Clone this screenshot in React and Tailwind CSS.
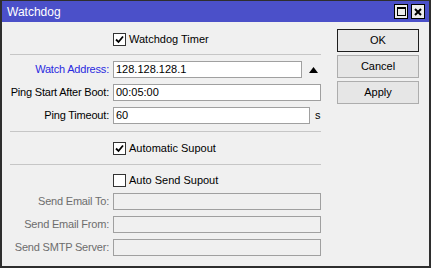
import React from 'react';

const font = { fontFamily: '"Liberation Sans", Arial, sans-serif' };

const Check = ({ checked }) => (
    <span className="flex h-[13px] w-[13px] items-center justify-center border border-[#333333] bg-white">
        {checked && (
            <svg width="9" height="9" viewBox="0 0 9 9">
                <path d="M1 4.5 L3.5 7 L8 1.5" fill="none" stroke="#000" strokeWidth="1.8" />
            </svg>
        )}
    </span>
);

const CheckRow = ({ checked, label, className }) => (
    <div className={`flex h-[17px] items-center gap-[3px] pl-[103px] ${className}`}>
        <Check checked={checked} />
        <span className="text-[11px] text-black">{label}</span>
    </div>
);

const Field = ({ label, value, labelClass, inputClass, after, className, disabled }) => (
    <div className={`flex h-[17px] items-center ${className}`}>
        <span className={`w-[99px] text-right text-[11px] tracking-[-0.2px] whitespace-nowrap ${labelClass}`}>{label}</span>
        <div
            className={`ml-[4px] flex h-[17px] items-center border border-[#a0a0a0] px-[2px] text-[11px] text-black ${disabled ? 'bg-[#f0f0f0]' : 'bg-white'} ${inputClass}`}
        >
            {value}
        </div>
        {after}
    </div>
);

const Separator = ({ className }) => <div className={`h-px w-[311px] bg-[#c6c6c6] ${className}`} />;

const Button = ({ children, primary, className }) => (
    <div
        className={`flex h-[23px] w-[82px] items-center justify-center text-[11px] text-black ${primary ? 'border border-[#1e1e1e] bg-[#e8e8e8]' : 'border border-[#adadad] bg-[#e6e6e6]'} ${className}`}
    >
        {children}
    </div>
);

const App = () => {
    return (
        <div
            className="flex h-[268px] w-[431px] flex-col border-x-2 border-b-2 border-t border-[#2e2e2e] bg-[#f0f0f0]"
            style={font}
        >
            {/* title bar */}
            <div className="flex h-[21px] items-center justify-between bg-[#4b50c9] pl-[5px] pr-[4px]">
                <span className="text-[12px] text-white">Watchdog</span>
                <div className="flex gap-[3px]">
                    <div className="flex h-[15px] w-[14px] items-center justify-center border border-black bg-[#ececec]">
                        <div className="h-[9px] w-[9px] border border-black border-t-2" />
                    </div>
                    <div className="flex h-[15px] w-[14px] items-center justify-center border border-black bg-[#ececec]">
                        <svg width="8" height="8" viewBox="0 0 8 8">
                            <path d="M1 1 L7 7 M7 1 L1 7" stroke="#000" strokeWidth="2" />
                        </svg>
                    </div>
                </div>
            </div>

            <div className="flex flex-1">
                {/* form */}
                <div className="flex w-[327px] flex-col pl-[8px]">
                    <CheckRow checked label="Watchdog Timer" className="mt-[9px]" />
                    <Separator className="mt-[6px]" />
                    <Field
                        label="Watch Address:"
                        labelClass="text-[#2a2ae0]"
                        value="128.128.128.1"
                        inputClass="w-[189px]"
                        className="mt-[6px]"
                        after={
                            <svg className="ml-[7px]" width="9" height="6" viewBox="0 0 9 6">
                                <polygon points="4.5,0 9,6 0,6" fill="#000" />
                            </svg>
                        }
                    />
                    <Field
                        label="Ping Start After Boot:"
                        labelClass="text-black"
                        value="00:05:00"
                        inputClass="w-[208px]"
                        className="mt-[6px]"
                    />
                    <Field
                        label="Ping Timeout:"
                        labelClass="text-black"
                        value="60"
                        inputClass="w-[197px]"
                        className="mt-[6px]"
                        after={<span className="ml-[5px] text-[11px] text-black">s</span>}
                    />
                    <Separator className="mt-[7px]" />
                    <CheckRow checked label="Automatic Supout" className="mt-[8px]" />
                    <Separator className="mt-[7px]" />
                    <CheckRow label="Auto Send Supout" className="mt-[7px]" />
                    <Field
                        label="Send Email To:"
                        labelClass="text-[#6d6d6d]"
                        inputClass="w-[208px]"
                        className="mt-[4px]"
                        disabled
                    />
                    <Field
                        label="Send Email From:"
                        labelClass="text-[#6d6d6d]"
                        inputClass="w-[208px]"
                        className="mt-[6px]"
                        disabled
                    />
                    <Field
                        label="Send SMTP Server:"
                        labelClass="text-[#6d6d6d]"
                        inputClass="w-[208px]"
                        className="mt-[6px]"
                        disabled
                    />
                </div>

                {/* buttons */}
                <div className="ml-[8px] flex flex-col pt-[7px]">
                    <Button primary>OK</Button>
                    <Button className="mt-[3px]">Cancel</Button>
                    <Button className="mt-[3px]">Apply</Button>
                </div>
            </div>
        </div>
    );
};

export default App;
